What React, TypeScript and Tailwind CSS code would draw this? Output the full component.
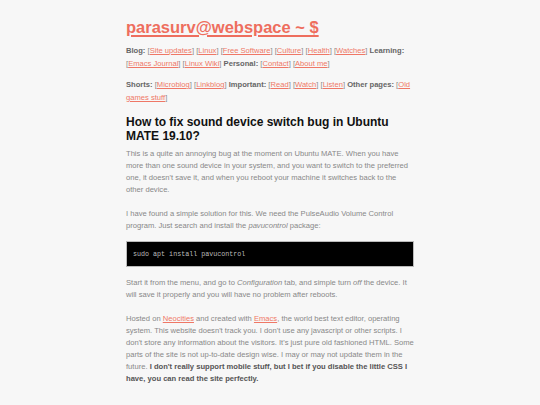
import React from "react";

const L = ({ children }: { children: React.ReactNode }) => (
  <>
    [<a className="text-[#ef7766] underline">{children}</a>]
  </>
);

const B = ({ children }: { children: React.ReactNode }) => (
  <b className="font-bold text-[#666]">{children}</b>
);

export default function App() {
  return (
    <div className="min-h-[405px] bg-[#f7f7f7] font-['Liberation_Sans',Arial,sans-serif]">
      <div className="mx-auto w-[288px] pt-[14px]">
        <h1 className="text-[16.5px] font-bold leading-[26px]">
          <a className="text-[#ee6e5e] underline decoration-[1.5px] underline-offset-2">parasurv@webspace ~ $</a>
        </h1>
        <p className="mt-[4px] text-[7.6px] leading-[13px] text-[#888]">
          <B>Blog:</B> <L>Site updates</L> <L>Linux</L> <L>Free Software</L> <L>Culture</L>{" "}
          <L>Health</L> <L>Watches</L> <B>Learning:</B> <L>Emacs Journal</L> <L>Linux Wiki</L>{" "}
          <B>Personal:</B> <L>Contact</L> <L>About me</L>
        </p>
        <p className="mt-[8px] text-[7.6px] leading-[13px] text-[#888]">
          <B>Shorts:</B> <L>Microblog</L> <L>Linkblog</L> <B>Important:</B> <L>Read</L>{" "}
          <L>Watch</L> <L>Listen</L> <B>Other pages:</B> <L>Old games stuff</L>
        </p>
        <h2 className="mt-[11px] text-[12px] font-bold leading-[14px] text-[#111]">
          How to fix sound device switch bug in Ubuntu MATE 19.10?
        </h2>
        <div className="mt-[5px] text-[7.6px] leading-[12px] text-[#888]">
          <p>
            This is a quite an annoying bug at the moment on Ubuntu MATE. When you have more than
            one sound device in your system, and you want to switch to the preferred one, it
            doesn't save it, and when you reboot your machine it switches back to the other device.
          </p>
          <p className="mt-[12px]">
            I have found a simple solution for this. We need the PulseAudio Volume Control program.
            Just search and install the <i>pavucontrol</i> package:
          </p>
          <pre className="mt-[9px] border border-[#bbb] bg-black px-[6px] py-[7px] font-['Liberation_Mono',monospace] text-[6.7px] leading-[10px] text-[#bbb]">
            sudo apt install pavucontrol
          </pre>
          <p className="mt-[10px]">
            Start it from the menu, and go to <i>Configuration</i> tab, and simple turn <i>off</i>{" "}
            the device. It will save it properly and you will have no problem after reboots.
          </p>
          <p className="mt-[12px]">
            Hosted on <a className="text-[#ef7766] underline">Neocities</a> and created with{" "}
            <a className="text-[#ef7766] underline">Emacs</a>, the world best text editor, operating
            system. This website doesn't track you. I don't use any javascript or other scripts. I
            don't store any information about the visitors. It's just pure old fashioned HTML. Some
            parts of the site is not up-to-date design wise. I may or may not update them in the
            future.{" "}
            <b className="font-bold text-[#555]">
              I don't really support mobile stuff, but I bet if you disable the little CSS I have,
              you can read the site perfectly.
            </b>
          </p>
        </div>
      </div>
    </div>
  );
}
